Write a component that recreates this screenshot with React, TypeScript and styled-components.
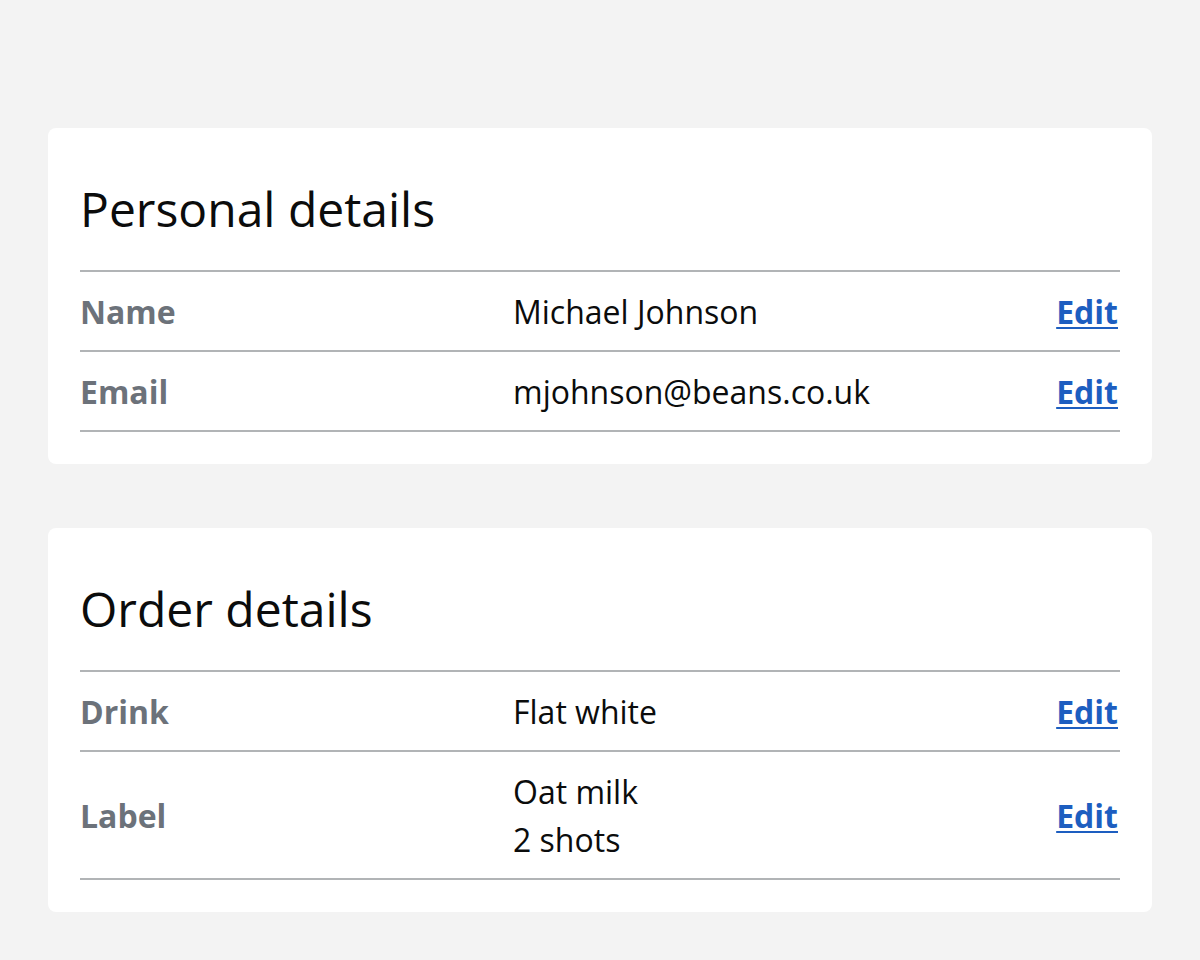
import React from 'react';
import styled, { createGlobalStyle } from 'styled-components';

const GlobalStyle = createGlobalStyle`
  html, body {
    margin: 0;
    padding: 0;
    background: #f3f3f3;
    font-family: "Open Sans", "Noto Sans", sans-serif;
    color: #0b0c0c;
  }
`;

type Row = { key: string; values: string[] };

const personal: Row[] = [
  { key: 'Name', values: ['Michael Johnson'] },
  { key: 'Email', values: ['mjohnson@beans.co.uk'] },
];

const order: Row[] = [
  { key: 'Drink', values: ['Flat white'] },
  { key: 'Label', values: ['Oat milk', '2 shots'] },
];

function Summary({ title, rows }: { title: string; rows: Row[] }) {
  return (
    <Card>
      <Title>{title}</Title>
      <SummaryList>
        {rows.map((r) => (
          <SummaryRow key={r.key}>
            <Key>{r.key}</Key>
            <Value>
              {r.values.map((v) => (
                <div key={v}>{v}</div>
              ))}
            </Value>
            <Action href="#">Edit</Action>
          </SummaryRow>
        ))}
      </SummaryList>
    </Card>
  );
}

export default function App() {
  return (
    <Page>
      <GlobalStyle />
      <Summary title="Personal details" rows={personal} />
      <Summary title="Order details" rows={order} />
    </Page>
  );
}

const Page = styled.main`
  display: flex;
  flex-direction: column;
  gap: 64px;
  padding: 128px 48px 48px;
`;

const Card = styled.section`
  background: #ffffff;
  border-radius: 8px;
  padding: 32px;
`;

const Title = styled.h2`
  margin: 0;
  padding: 21px 0 33px;
  font-size: 48px;
  font-weight: 400;
  line-height: 56px;
  color: #0b0c0c;
`;

const SummaryList = styled.div`
  display: flex;
  flex-direction: column;
  border-top: 2px solid #b1b4b6;
`;

const SummaryRow = styled.div`
  display: grid;
  grid-template-columns: 433px 1fr auto;
  align-items: center;
  padding: 16px 0 14px;
  border-bottom: 2px solid #b1b4b6;
  font-size: 32px;
  line-height: 48px;
`;

const Key = styled.div`
  font-weight: 700;
  color: #6c727a;
`;

const Value = styled.div`
  color: #0b0c0c;
`;

const Action = styled.a`
  font-weight: 700;
  color: #1d5ec0;
  text-decoration: underline;
  text-decoration-thickness: 1.5px;
  text-underline-offset: 3px;
  margin-right: 2px;
`;
